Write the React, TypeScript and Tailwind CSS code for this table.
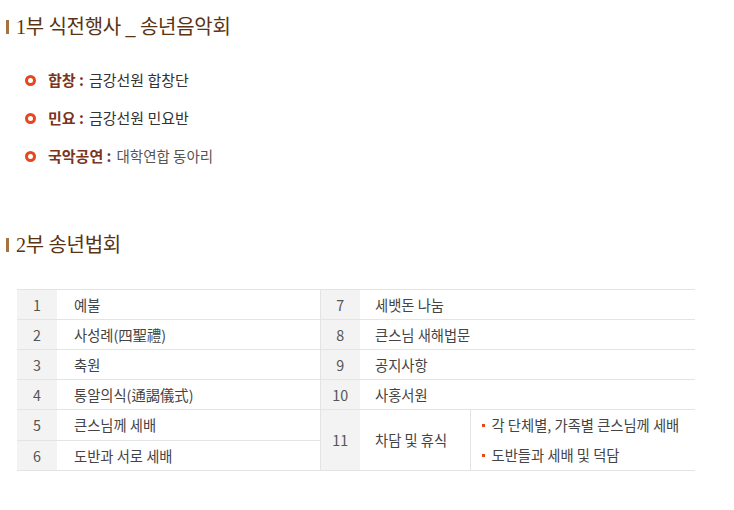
const font = { fontFamily: '"Noto Sans CJK KR", "Noto Sans", sans-serif' }

const items = [
  { label: '합창', value: '금강선원 합창단', light: false },
  { label: '민요', value: '금강선원 민요반', light: false },
  { label: '국악공연', value: '대학연합 동아리', light: true },
]

const leftRows = [
  { n: '1', t: '예불' },
  { n: '2', t: '사성례(四聖禮)' },
  { n: '3', t: '축원' },
  { n: '4', t: '통알의식(通謁儀式)' },
  { n: '5', t: '큰스님께 세배' },
  { n: '6', t: '도반과 서로 세배' },
]

const rightRows = [
  { n: '7', t: '세뱃돈 나눔' },
  { n: '8', t: '큰스님 새해법문' },
  { n: '9', t: '공지사항' },
  { n: '10', t: '사홍서원' },
]

function Heading({ children }: { children: React.ReactNode }) {
  return (
    <h2 className="flex h-[20px] items-center">
      <span className="ml-[6px] h-[14px] w-[3px] bg-[#a4733f]" />
      <span
        className="ml-[7px] text-[20px] leading-[20px] tracking-[-0.3px] text-[#5a3315]"
        style={{ fontFamily: '"Liberation Serif", "Noto Sans CJK KR", serif' }}
      >
        {children}
      </span>
    </h2>
  )
}

export default function App() {
  return (
    <div className="h-[510px] w-[734px] bg-white pt-[17px]" style={font}>
      <Heading>1부 식전행사 _ 송년음악회</Heading>

      <ul className="mt-[24px] pl-[25px]">
        {items.map((item) => (
          <li key={item.label} className="flex h-[38px] items-center">
            <span className="h-[11px] w-[11px] rounded-full border-[3px] border-[#e8461c]" />
            <span className="ml-[12px] text-[15px] font-bold text-[#7b3420]">{item.label} :</span>
            <span
              className={
                item.light
                  ? 'ml-[5px] text-[14.5px] text-[#555]'
                  : 'ml-[5px] text-[15px] text-[#333]'
              }
            >
              {item.value}
            </span>
          </li>
        ))}
      </ul>

      <div className="mt-[60px]">
        <Heading>2부 송년법회</Heading>
      </div>

      <table className="ml-[17px] mt-[34px] w-[678px] table-fixed border-collapse border-t border-[#e4e4e4] text-[14.3px] text-[#444]">
        <colgroup>
          <col className="w-[40px]" />
          <col className="w-[263px]" />
          <col className="w-[40px]" />
          <col className="w-[110px]" />
          <col className="w-[225px]" />
        </colgroup>
        <tbody>
          {leftRows.map((row, i) => (
            <tr key={row.n} className="h-[30px] border-b border-[#e4e4e4]">
              <td className="bg-[#f3f3f3] p-0 text-center text-[#555]">{row.n}</td>
              <td className="p-0 pl-[17px]">{row.t}</td>
              {i < 4 && (
                <>
                  <td className="border-l border-[#e4e4e4] bg-[#f3f3f3] p-0 text-center text-[#555]">
                    {rightRows[i].n}
                  </td>
                  <td colSpan={2} className="p-0 pl-[15px]">
                    {rightRows[i].t}
                  </td>
                </>
              )}
              {i === 4 && (
                <>
                  <td rowSpan={2} className="border-l border-[#e4e4e4] bg-[#f3f3f3] p-0 text-center text-[#555]">
                    11
                  </td>
                  <td rowSpan={2} className="p-0 pl-[15px]">
                    차담 및 휴식
                  </td>
                  <td rowSpan={2} className="border-l border-[#e4e4e4] p-0 pl-[11px]">
                    <ul>
                      <li className="flex h-[30px] items-center">
                        <span className="h-[3px] w-[3px] bg-[#e8461c]" />
                        <span className="ml-[7px]">각 단체별, 가족별 큰스님께 세배</span>
                      </li>
                      <li className="flex h-[30px] items-center">
                        <span className="h-[3px] w-[3px] bg-[#e8461c]" />
                        <span className="ml-[7px]">도반들과 세배 및 덕담</span>
                      </li>
                    </ul>
                  </td>
                </>
              )}
            </tr>
          ))}
        </tbody>
      </table>
    </div>
  )
}
